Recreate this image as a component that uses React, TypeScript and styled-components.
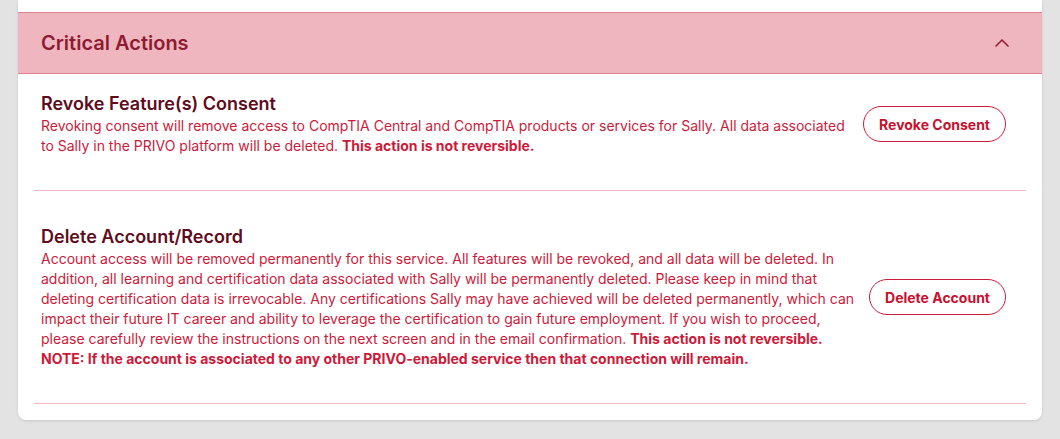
import React, { useState } from "react";
import styled, { createGlobalStyle } from "styled-components";

const GlobalStyle = createGlobalStyle`
  html, body {
    margin: 0;
    padding: 0;
    background: #e3e3e3;
    font-family: Inter, "Noto Sans", sans-serif;
  }
`;

const Page = styled.div`
  padding: 0 18px 19px;
`;

const Card = styled.div`
  background: #ffffff;
  border-radius: 0 0 8px 8px;
  box-shadow: 0 1px 3px rgba(0, 0, 0, 0.12);
  padding-top: 12px;
`;

const Header = styled.div`
  display: flex;
  align-items: center;
  justify-content: space-between;
  height: 60px;
  padding: 0 32px 0 23px;
  background: #efb6bf;
  border-top: 1px solid #e38294;
  border-bottom: 1px solid #e38294;
  color: #8e1b32;
  cursor: pointer;
  .title {
    font-size: 20px;
    font-weight: 600;
  }
`;

const Body = styled.div`
  padding: 0 16px 16px;
`;

const Section = styled.div<{ $top: number; $bottom: number }>`
  display: flex;
  align-items: center;
  justify-content: space-between;
  padding: ${(p) => p.$top}px 20px ${(p) => p.$bottom}px 7px;
  border-bottom: 1px solid #f3b9c2;
`;

const Text = styled.div`
  width: 818px;
  .title {
    font-size: 18px;
    line-height: 24px;
    font-weight: 600;
    color: #5e0b1c;
  }
  .description {
    font-size: 14px;
    line-height: 20px;
    color: #cc1a3a;
    b {
      font-weight: 700;
    }
  }
`;

const ActionButton = styled.button`
  height: 36px;
  padding: 0 15px;
  border: 1px solid #cc1a3a;
  border-radius: 18px;
  background: #ffffff;
  color: #c8102e;
  font-family: inherit;
  font-size: 14px;
  font-weight: 700;
  white-space: nowrap;
  cursor: pointer;
`;

export default function App() {
  const [open, setOpen] = useState(true);

  return (
    <Page>
      <GlobalStyle />
      <Card>
        <Header onClick={() => setOpen(!open)}>
          <span className="title">Critical Actions</span>
          <svg width="16" height="10" viewBox="0 0 16 10" fill="none">
            <path d="M1.5 8.5L8 2L14.5 8.5" stroke="#8e1b32" strokeWidth="1.5" />
          </svg>
        </Header>
        {open && (
          <Body>
            <Section $top={18} $bottom={34}>
              <Text>
                <div className="title">Revoke Feature(s) Consent</div>
                <div className="description">
                  Revoking consent will remove access to CompTIA Central and CompTIA products or services for Sally.
                  All data associated to Sally in the PRIVO platform will be deleted.{" "}
                  <b>This action is not reversible.</b>
                </div>
              </Text>
              <ActionButton>Revoke Consent</ActionButton>
            </Section>
            <Section $top={34} $bottom={34}>
              <Text>
                <div className="title">Delete Account/Record</div>
                <div className="description">
                  Account access will be removed permanently for this service. All features will be revoked, and all
                  data will be deleted. In addition, all learning and certification data associated with Sally will
                  be permanently deleted. Please keep in mind that deleting certification data is irrevocable. Any
                  certifications Sally may have achieved will be deleted permanently, which can impact their future IT
                  career and ability to leverage the certification to gain future employment. If you wish to proceed,
                  please carefully review the instructions on the next screen and in the email confirmation.{" "}
                  <b>This action is not reversible.</b>
                  <br />
                  <b>NOTE: If the account is associated to any other PRIVO-enabled service then that connection will remain.</b>
                </div>
              </Text>
              <ActionButton>Delete Account</ActionButton>
            </Section>
          </Body>
        )}
      </Card>
    </Page>
  );
}
